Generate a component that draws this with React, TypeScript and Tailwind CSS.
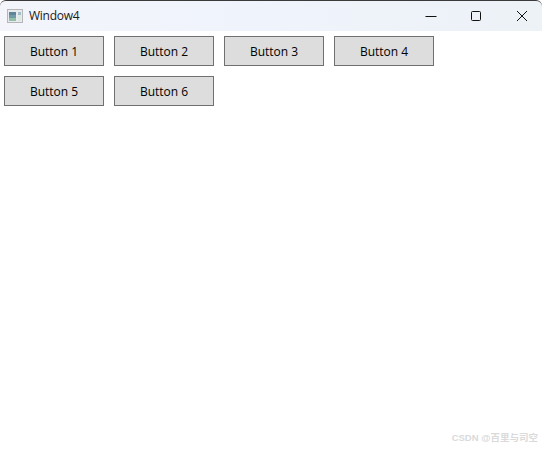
const buttons = ["Button 1", "Button 2", "Button 3", "Button 4", "Button 5", "Button 6"];

function WindowIcon() {
    return (
        <svg width="16" height="14" viewBox="0 0 16 14" className="block">
            <rect x="0.5" y="0.5" width="15" height="13" fill="#e8eaec" stroke="#b4b6b9" />
            <rect x="2" y="3" width="7" height="9" fill="#6f9ca6" />
            <rect x="2" y="3" width="7" height="3" fill="#5f8499" />
            <rect x="2" y="9" width="7" height="3" fill="#93bfa8" />
            <rect x="11" y="3" width="3" height="3" fill="#a3bdca" />
            <rect x="11" y="6" width="3" height="6" fill="#dce8e2" />
        </svg>
    );
}

export default function App() {
    return (
        <div className="relative w-full h-[450px] bg-white overflow-hidden font-['Open_Sans','Liberation_Sans',sans-serif] text-[12px] text-black">
            {/* Title bar */}
            <div className="h-[31px] flex items-center justify-between border-t border-[#3a3a3a] rounded-t-[6px] bg-gradient-to-r from-[#f3f5fb] via-[#eff3fb] to-[#edf2f7]">
                <div className="flex items-center pl-[7px] gap-[6px]">
                    <WindowIcon />
                    <span className="text-[#1a1a1a] tracking-[-0.25px]">Window4</span>
                </div>
                <div className="flex items-center -mr-[3px]">
                    <div className="w-[46px] h-[30px] flex items-center justify-center">
                        <svg width="12" height="12" viewBox="0 0 12 12" className="ml-[2px]">
                            <path d="M0.5 6.5H11.5" stroke="#111" strokeWidth="1" fill="none" />
                        </svg>
                    </div>
                    <div className="w-[46px] h-[30px] flex items-center justify-center">
                        <svg width="12" height="12" viewBox="0 0 12 12">
                            <rect x="1.5" y="1.5" width="9" height="9" rx="1" stroke="#111" strokeWidth="1" fill="none" />
                        </svg>
                    </div>
                    <div className="w-[46px] h-[30px] flex items-center justify-center">
                        <svg width="12" height="12" viewBox="0 0 12 12">
                            <path d="M1 1L11 11M11 1L1 11" stroke="#111" strokeWidth="1" fill="none" />
                        </svg>
                    </div>
                </div>
            </div>

            {/* Wrap panel */}
            <div className="flex flex-wrap gap-[10px] pl-1 pt-[5px]">
                {buttons.map((label) => (
                    <button
                        key={label}
                        className="w-[100px] h-[30px] pt-px bg-[#dddddd] border border-[#707070] flex items-center justify-center"
                    >
                        {label}
                    </button>
                ))}
            </div>

            {/* Watermark */}
            <div className="absolute right-[4px] bottom-[5px] text-[9.5px] font-bold text-[#dadada] font-['Liberation_Sans','Noto_Sans_CJK_SC',sans-serif]">
                CSDN @百里与司空
            </div>
        </div>
    );
}
